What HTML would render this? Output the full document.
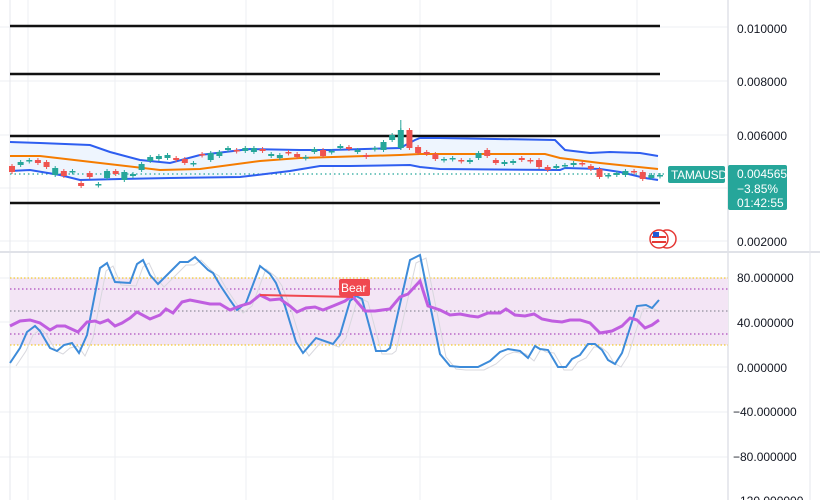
<!DOCTYPE html>
<html><head><meta charset="utf-8"><style>
body{margin:0;width:820px;height:500px;overflow:hidden;background:#fff;font-family:"Liberation Sans",sans-serif}
svg{position:absolute;left:0;top:0}
</style></head><body>
<svg id="s" width="820" height="500" xmlns="http://www.w3.org/2000/svg">
<g stroke="#eeeff3" stroke-width="1">
<line x1="28" y1="0" x2="28" y2="500"/><line x1="115" y1="0" x2="115" y2="500"/><line x1="246" y1="0" x2="246" y2="500"/><line x1="333" y1="0" x2="333" y2="500"/><line x1="420" y1="0" x2="420" y2="500"/><line x1="551" y1="0" x2="551" y2="500"/><line x1="637" y1="0" x2="637" y2="500"/>
<line x1="0" y1="27" x2="728" y2="27"/><line x1="0" y1="81" x2="728" y2="81"/><line x1="0" y1="135" x2="728" y2="135"/><line x1="0" y1="188" x2="728" y2="188"/><line x1="0" y1="241" x2="728" y2="241"/>
<line x1="0" y1="278" x2="728" y2="278"/><line x1="0" y1="322" x2="728" y2="322"/><line x1="0" y1="367" x2="728" y2="367"/><line x1="0" y1="412" x2="728" y2="412"/><line x1="0" y1="457" x2="728" y2="457"/>
</g>
<line x1="10" y1="0" x2="10" y2="500" stroke="#e6e7ec"/>
<line x1="0" y1="252" x2="820" y2="252" stroke="#e0e2e8" stroke-width="2"/>
<line x1="728" y1="0" x2="728" y2="500" stroke="#e0e2e8" stroke-width="1.5"/>
<line x1="810" y1="0" x2="810" y2="500" stroke="#e6e7ec"/>
<!-- black lines -->
<g stroke="#111" stroke-width="2.5">
<line x1="10" y1="26" x2="660" y2="26"/><line x1="10" y1="74" x2="660" y2="74"/><line x1="10" y1="136" x2="660" y2="136"/><line x1="10" y1="203" x2="660" y2="203"/>
</g>
<!-- bollinger fill -->
<polygon fill="#eef5fe" points="10,142 40,143 90,145 110,152 140,160 170,163 200,155 250,149 300,150 330,150 400,148 415,140 420,138 440,138 555,140 565,150 590,153 610,152 640,153 658,156 658,180 645,178 620,172 600,169 565,168 560,170 440,169 420,167 410,165 350,166 320,166 290,171 240,177 170,178 120,179 80,180 60,175 30,170 10,171"/>
<line x1="10" y1="174" x2="665" y2="174" stroke="#26a69a" stroke-width="1.3" stroke-dasharray="1.5,3"/>
<polyline fill="none" stroke="#2e5ef0" stroke-width="2" points="10,142 40,143 90,145 110,152 140,160 170,163 200,155 250,149 300,150 330,150 400,148 415,140 420,138 440,138 555,140 565,150 590,153 610,152 640,153 658,156"/>
<polyline fill="none" stroke="#2e5ef0" stroke-width="2" points="10,171 30,170 60,175 80,180 120,179 170,178 240,177 290,171 320,166 350,166 410,165 420,167 440,169 560,170 565,168 600,169 620,172 645,178 658,180"/>
<polyline fill="none" stroke="#f57c00" stroke-width="2" points="10,156 40,156 100,163 160,170 200,169 260,161 300,158 400,155 420,154 545,154 560,158 600,163 658,169"/>
<g id="c"></g>
<!-- indicator -->
<rect x="10" y="278" width="718" height="67" fill="#f3e5f5"/>
<line x1="10" y1="278" x2="728" y2="278" stroke="#f0c000" stroke-dasharray="1.5,2"/>
<line x1="10" y1="345" x2="728" y2="345" stroke="#f0c000" stroke-dasharray="1.5,2"/>
<line x1="10" y1="289" x2="728" y2="289" stroke="#9c27b0" stroke-dasharray="1.5,2.5"/>
<line x1="10" y1="311" x2="728" y2="311" stroke="#787b86" stroke-dasharray="1.5,2.5"/>
<line x1="10" y1="334" x2="728" y2="334" stroke="#9c27b0" stroke-dasharray="1.5,2.5"/>
<polyline fill="none" stroke="#d8d8de" stroke-width="1" transform="translate(6,3)" points="10,363 20,348 27,332 35,326 40,331 50,348 57,351 64,345 72,343 79,353 87,335 100,268 107,263 115,282 130,283 137,264 143,260 150,275 158,284 172,270 180,262 188,262 195,257 208,270 213,273 220,285 230,300 237,310 246,303 260,266 270,274 276,283 285,306 296,342 303,353 316,338 333,344 340,335 350,301 356,296 362,299 376,351 386,351 390,348 410,260 420,255 440,354 450,366 460,367 478,367 490,361 500,352 508,349 520,351 528,358 535,346 540,349 548,350 558,367 566,367 572,359 580,355 588,344 595,344 602,350 608,360 615,364 622,353 637,306 646,305 652,308"/>
<polyline fill="none" stroke="#3d8bd9" stroke-width="2" points="10,363 20,348 27,332 35,326 40,331 50,348 57,351 64,345 72,343 79,353 87,335 100,268 107,263 115,282 130,283 137,264 143,260 150,275 158,284 172,270 180,262 188,262 195,257 208,270 213,273 220,285 230,300 237,310 246,303 260,266 270,274 276,283 285,306 296,342 303,353 316,338 333,344 340,335 350,301 356,296 362,299 376,351 386,351 390,348 410,260 420,255 440,354 450,366 460,367 478,367 490,361 500,352 508,349 520,351 528,358 535,346 540,349 548,350 558,367 566,367 572,359 580,355 588,344 595,344 602,350 608,360 615,364 622,353 637,306 646,305 652,308 659,300"/>
<polyline fill="none" stroke="#c05ee0" stroke-width="3" points="10,326 20,321 30,320 40,323 50,330 57,326 65,326 78,332 87,322 95,321 100,323 108,320 115,326 122,323 130,318 137,312 150,319 160,315 166,309 173,313 182,302 190,300 200,302 210,304 220,304 230,310 240,306 250,303 260,295 270,300 280,299 290,306 297,312 306,308 315,307 323,310 333,306 345,301 352,296 365,311 375,311 390,309 400,297 408,294 420,281 428,306 440,310 450,315 460,314 470,316 478,317 488,313 500,313 506,309 515,315 525,316 534,314 542,319 552,321 562,322 570,320 580,320 590,323 600,333 612,331 622,326 630,318 637,320 645,328 652,325 659,320"/>
<line x1="260" y1="295" x2="353" y2="297" stroke="#f04850" stroke-width="2"/>
<rect x="339" y="279" width="31" height="17" rx="2" fill="#f04850"/>
<text x="341" y="292" font-size="12" fill="#fff">Bear</text>
<!-- flag icon -->
<circle cx="667" cy="239" r="9" fill="#fff" stroke="#e53935" stroke-width="1.5"/>
<circle cx="659" cy="239" r="9" fill="#fff" stroke="#e53935" stroke-width="1.5"/>
<rect x="652" y="236" width="14" height="2" fill="#e53935"/><rect x="652" y="241" width="14" height="2" fill="#e53935"/>
<rect x="653" y="232" width="6" height="5" fill="#1e5bd8"/>
<!-- labels -->
<rect x="668" y="166" width="57" height="17" rx="2" fill="#26a69a"/>
<text x="671" y="179" font-size="12" fill="#fff" letter-spacing="-0.3">TAMAUSD</text>
<rect x="728" y="165" width="59" height="45" rx="2" fill="#26a69a"/>
<text x="737" y="178" font-size="12" fill="#fff">0.004565</text>
<text x="737" y="193" font-size="12" fill="#fff">−3.85%</text>
<text x="737" y="207" font-size="12" fill="#fff">01:42:55</text>
<g font-size="12" fill="#131722">
<text x="737" y="33">0.010000</text><text x="737" y="86">0.008000</text><text x="737" y="140">0.006000</text><text x="737" y="246">0.002000</text>
<text x="737" y="282">80.000000</text><text x="737" y="327">40.000000</text><text x="737" y="372">0.000000</text><text x="733" y="416">−40.000000</text><text x="733" y="461">−80.000000</text><text x="733" y="505">−120.000000</text>
</g>
</svg>
<script>
var d=[[172,166,0],[165,162,1],[161,160,1],[160,163,0],[162,167,0],[175,168,1],[176,171,0],[172,171,1],[183,186,0],[177,173,0],[185,184,1],[178,171,1],[174,171,0],[180,172,1],[176,174,1],[170,164,1],[161,157,1],[159,156,1],[158,155,1],[160,158,0],[159,163,0],[163,163,1],[155,154,0],[160,153,1],[156,152,1],[150,148,1],[150,151,0],[148,151,1],[152,148,1],[149,151,0],[156,154,1],[158,155,1],[152,152,0],[154,157,0],[158,157,1],[152,149,1],[150,156,0],[152,151,1],[148,146,1],[149,147,0],[152,150,1],[155,157,0],[148,149,1],[150,142,1],[140,135,1],[148,130,1],[130,148,0],[147,153,0],[152,154,0],[154,159,0],[159,160,1],[159,158,1],[160,161,0],[162,160,1],[158,153,1],[156,150,0],[160,163,0],[162,164,1],[163,161,1],[160,158,0],[160,161,0],[160,167,0],[167,170,0],[168,166,1],[166,165,1],[165,163,1],[163,163,0],[166,169,0],[169,177,0],[175,176,1],[175,173,1],[175,171,1],[171,172,0],[172,179,0],[178,175,1],[176,175,1]];
var g=document.getElementById('c'),s='',n=d.length;
for(var i=0;i<n;i++){var x=12+i*(648/(n-1)),o=d[i][0],c=d[i][1],col=d[i][2]?'#26a69a':'#ef5350';var t=Math.min(o,c),h=Math.max(Math.abs(o-c),1.5);
if(i==45){s+='<line x1="'+x+'" y1="120" x2="'+x+'" y2="150" stroke="'+col+'"/>';}
s+='<line x1="'+x+'" y1="'+(t-2)+'" x2="'+x+'" y2="'+(t+h+2)+'" stroke="'+col+'"/><rect x="'+(x-3)+'" y="'+t+'" width="6" height="'+h+'" fill="'+col+'"/>';}
g.innerHTML=s;
</script>
</body></html>
